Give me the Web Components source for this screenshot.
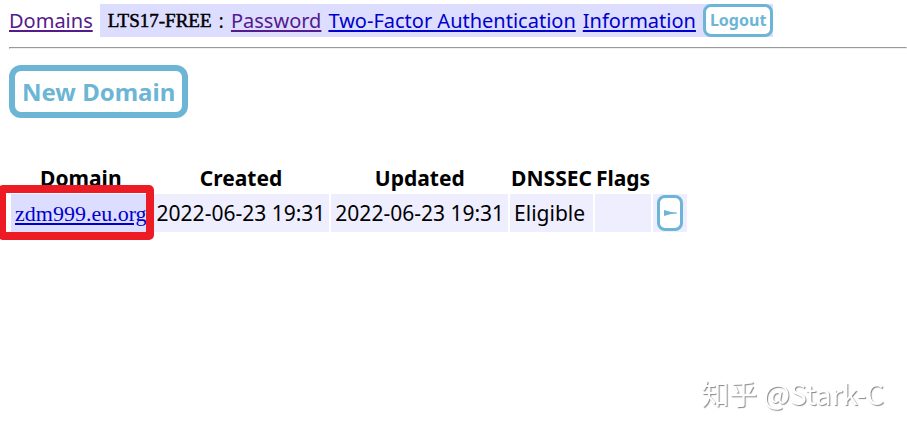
<!DOCTYPE html>
<html lang="en">
<head>
<meta charset="utf-8">
<title>Domains</title>
<style>
  body {
    margin: 0;
    background: #fff;
    color: #000;
    font: 20px/28px "Noto Sans", "Open Sans", sans-serif;
  }
</style>
</head>
<body>
<domain-page></domain-page>

<script>
class OutlineButton extends HTMLElement {
  constructor() {
    super();
    this.attachShadow({ mode: 'open' });
  }

  connectedCallback() {
    this.shadowRoot.innerHTML = `
      <style>
        :host { display: inline-flex; }
        button {
          display: flex;
          align-items: center;
          margin: 0;
          padding: 3px 4px;
          border: 3px solid #6cb5d5;
          border-radius: 8px;
          background: #fff;
          color: #6cb5d5;
          font: bold 16px/21px "Noto Sans", "Open Sans", sans-serif;
          white-space: nowrap;
        }
        :host([size="large"]) button {
          padding: 6px 7px;
          border-width: 6px;
          border-radius: 12px;
          font-size: 24px;
          line-height: 29px;
        }
        :host([size="icon"]) button {
          padding: 5px 3px;
          line-height: 20px;
        }
      </style>
      <button type="button" aria-label="${this.getAttribute('label') || this.textContent}"><slot></slot></button>
    `;
  }
}

class AccountNav extends HTMLElement {
  constructor() {
    super();
    this.attachShadow({ mode: 'open' });
  }

  connectedCallback() {
    const handle = this.getAttribute('handle') || '';
    this.shadowRoot.innerHTML = `
      <style>
        :host { display: block; }
        nav, .account {
          display: flex;
          align-items: center;
          gap: 7px;
          white-space: nowrap;
        }
        a { color: #0000cc; text-decoration-thickness: 2px; text-underline-offset: 2px; }
        a.seen { color: #551a8b; }
        .account { padding-left: 8px; background: #ddddff; }
        .handle {
          font: 19px/28px "Liberation Serif", serif;
          -webkit-text-stroke: 0.5px #000;
        }
      </style>
      <nav>
        <a class="seen" href="#domains">Domains</a>
        <span class="account">
          <span class="handle">${handle}</span>
          <span>:</span>
          <a class="seen" href="#password">Password</a>
          <a href="#two-factor">Two-Factor Authentication</a>
          <a href="#information">Information</a>
          <outline-button>Logout</outline-button>
        </span>
      </nav>
    `;
  }
}

class DomainTable extends HTMLElement {
  constructor() {
    super();
    this.attachShadow({ mode: 'open' });
  }

  connectedCallback() {
    this.shadowRoot.innerHTML = `
      <style>
        :host { display: block; }
        table { border-spacing: 2px; font-size: 21px; }
        th, td { padding: 1px 4px; white-space: nowrap; }
        th { padding: 0 1px; line-height: 28px; }
        td { height: 36px; background: #eeeeff; }
        td.name { background: #ddddff; }
        td.action outline-button { display: flex; }
        a {
          color: #0000cc;
          font: 22px/28px "Liberation Serif", serif;
          text-underline-offset: 2px;
        }
        .marked { position: relative; }
        .marker {
          position: absolute;
          inset: -14px -7px -12px -17px;
          border: 8px solid #ed1c24;
          border-radius: 5px;
          pointer-events: none;
        }
        svg { display: block; }
      </style>
      <table>
        <thead>
          <tr><th>Domain</th><th>Created</th><th>Updated</th><th>DNSSEC</th><th>Flags</th></tr>
        </thead>
        <tbody>
          <tr>
            <td class="name">
              <div class="marked"><a href="#zdm999">zdm999.eu.org</a><span class="marker"></span></div>
            </td>
            <td>2022-06-23 19:31</td>
            <td>2022-06-23 19:31</td>
            <td>Eligible</td>
            <td></td>
            <td class="action">
              <outline-button size="icon" label="Open">
                <svg width="14" height="20" viewBox="0 0 14 20" aria-hidden="true">
                  <path d="M1 7v6l7-2 6-.5v-1L8 9z" fill="#6cb5d5"/>
                </svg>
              </outline-button>
            </td>
          </tr>
        </tbody>
      </table>
    `;
  }
}

class PageWatermark extends HTMLElement {
  constructor() {
    super();
    this.attachShadow({ mode: 'open' });
    this.shadowRoot.innerHTML = `
      <style>
        :host {
          position: fixed;
          right: 23px;
          bottom: 20px;
          color: #fff;
          font: 28px/36px "Noto Sans CJK SC", sans-serif;
          text-shadow: 1px 1px 1px #888;
          white-space: nowrap;
          pointer-events: none;
        }
      </style>
      <slot></slot>
    `;
  }
}

class DomainPage extends HTMLElement {
  constructor() {
    super();
    this.attachShadow({ mode: 'open' });
    this.shadowRoot.innerHTML = `
      <style>
        :host { display: block; padding: 4px 0 16px 9px; }
        hr { margin: 10px 0 16px; }
        outline-button { display: flex; }
        domain-table { margin-top: 44px; }
      </style>
      <account-nav handle="LTS17-FREE"></account-nav>
      <hr>
      <outline-button size="large">New Domain</outline-button>
      <domain-table></domain-table>
      <page-watermark>知乎 @Stark-C</page-watermark>
    `;
  }
}

customElements.define('outline-button', OutlineButton);
customElements.define('account-nav', AccountNav);
customElements.define('domain-table', DomainTable);
customElements.define('page-watermark', PageWatermark);
customElements.define('domain-page', DomainPage);
</script>
</body>
</html>
